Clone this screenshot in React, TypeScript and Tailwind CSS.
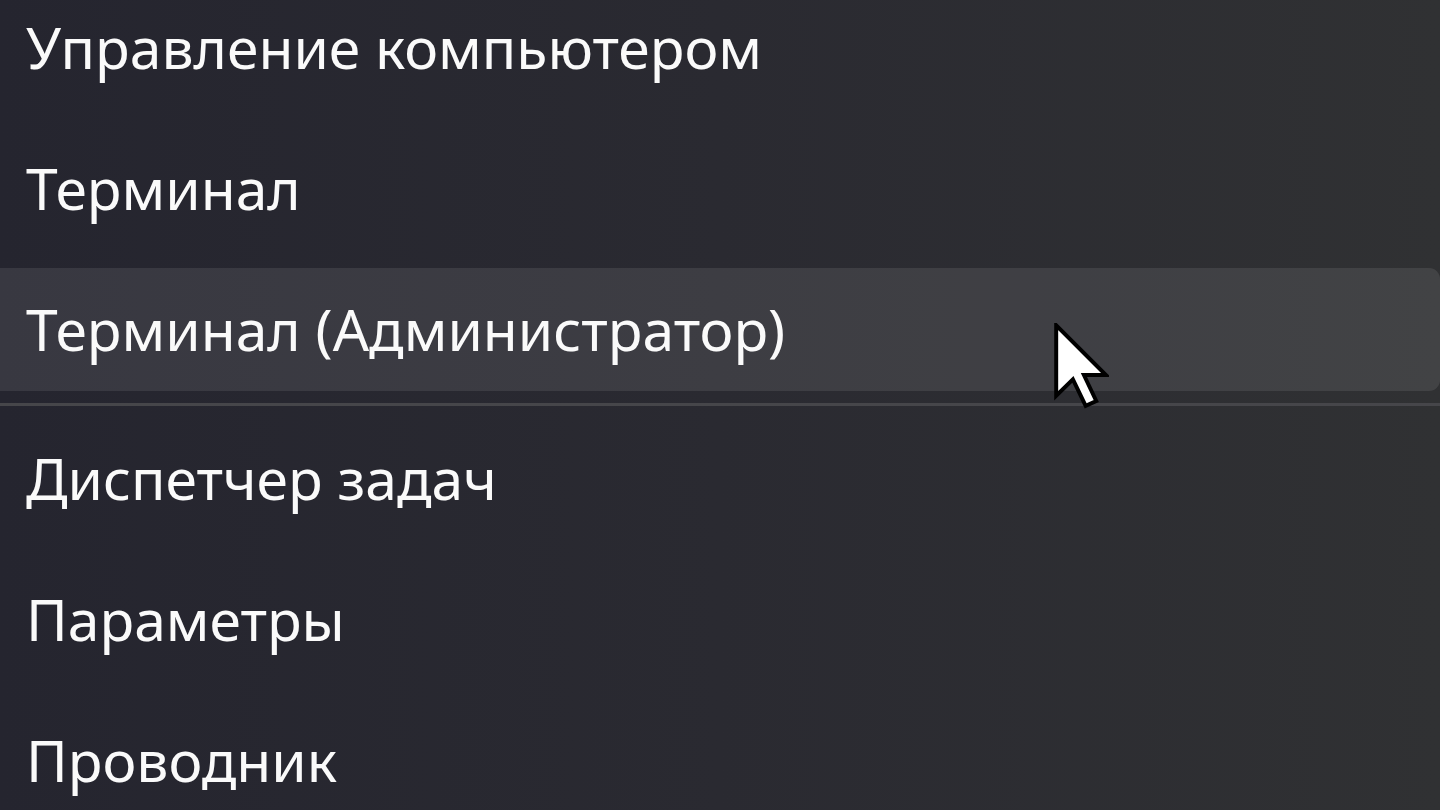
const items = [
  { label: 'Управление компьютером' },
  { label: 'Терминал' },
  { label: 'Терминал (Администратор)', active: true },
  { divider: true },
  { label: 'Диспетчер задач' },
  { label: 'Параметры' },
  { label: 'Проводник' },
];

function Cursor() {
  return (
    <svg
      className="absolute left-[1054px] top-[323px]"
      width="55"
      height="86"
      viewBox="0 0 12.5 19.5"
    >
      <polygon
        points="0.5,0.5 0.5,16.5 4.3,12.8 7.2,18.8 9.6,17.7 6.8,11.8 11.8,11.8"
        fill="#ffffff"
        stroke="#000000"
        strokeWidth="0.9"
        strokeLinejoin="miter"
      />
    </svg>
  );
}

export default function App() {
  return (
    <div
      className="relative h-[810px] w-[1440px] overflow-hidden bg-gradient-to-r from-[#25252f] via-[#2a2a31] to-[#303133] text-[#fafafa]"
      style={{ fontFamily: '"Noto Sans", "Open Sans", sans-serif' }}
    >
      <ul className="-mt-[23px]">
        {items.map((item, i) =>
          item.divider ? (
            <li key={i} className="flex h-[8px] items-center">
              <div className="h-[3px] w-full bg-[#46464a]" />
            </li>
          ) : (
            <li key={i} className="flex h-[141px] items-center py-[9px]">
              <div
                className={
                  'flex h-full w-full items-center rounded-r-[11px] pl-[26px] ' +
                  (item.active ? 'bg-white/[0.09]' : '')
                }
              >
                <span className="text-[57px] leading-none">{item.label}</span>
              </div>
            </li>
          )
        )}
      </ul>
      <Cursor />
    </div>
  );
}
